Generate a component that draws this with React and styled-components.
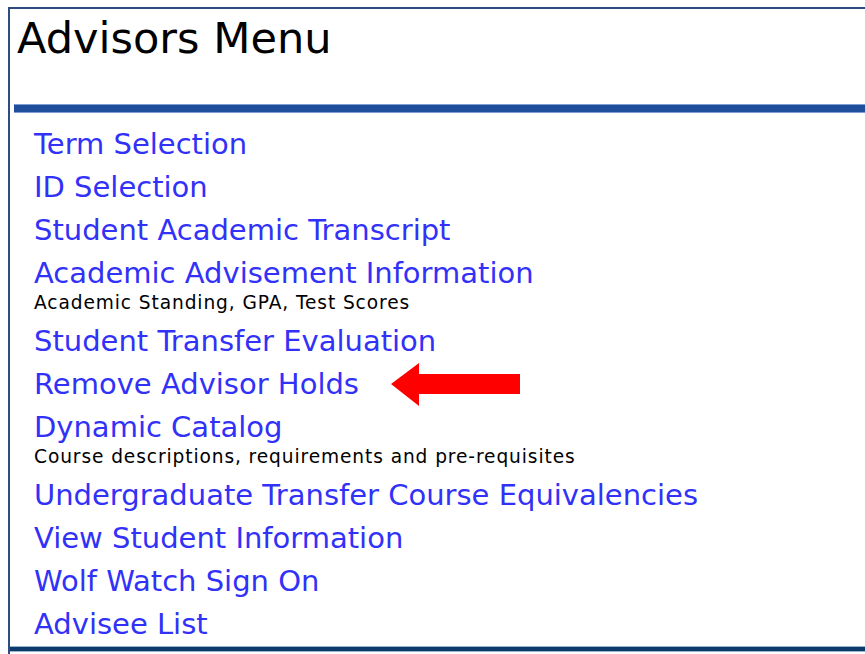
import React from "react"
import styled, { createGlobalStyle } from "styled-components"

const GlobalStyle = createGlobalStyle`
  html, body {
    margin: 0;
    padding: 0;
    background: #fff;
    overflow: hidden;
  }
`

const Frame = styled.div`
  margin: 7px 0 0 8px;
  height: 647px;
  border-top: 2px solid #2d4d80;
  border-left: 2px solid #2d4d80;
  box-sizing: border-box;
  display: flex;
  flex-direction: column;
  font-family: "DejaVu Sans", Verdana, sans-serif;

  & > * {
    flex-shrink: 0;
  }
`

const Title = styled.h1`
  margin: 4px 0 0 7px;
  font-size: 43.1px;
  font-weight: normal;
  line-height: 50px;
  color: #000;
`

const Rule = styled.div`
  margin: 41px 0 0 4px;
  height: 7px;
  background: #1f4e9d;
  border-top: 1px solid #7f9dd1;
  border-bottom: 1px solid #7f9dd1;
`

const MenuList = styled.ul`
  list-style: none;
  margin: 0;
  padding: 10px 0 0 24px;
`

const Item = styled.li`
  display: flex;
  flex-direction: column;
  margin-bottom: ${p => (p.$hasNote ? "7px" : "0")};
`

const Row = styled.div`
  display: flex;
  align-items: center;
`

const MenuLink = styled.a`
  font-size: 29px;
  line-height: 43px;
  color: #3131f8;
  text-decoration: none;
  white-space: nowrap;
`

const Note = styled.span`
  margin-top: -2px;
  font-size: 18.6px;
  letter-spacing: 0.9px;
  line-height: 20px;
  color: #000;
  white-space: nowrap;
`

const Pointer = styled.svg`
  margin-left: 32px;
  flex: none;
`

const FooterBar = styled.div`
  margin-top: auto;
  margin-bottom: 2px;
  height: 4px;
  background: #0c3a6b;
  border-top: 1px solid #9db2cc;
  border-bottom: 1px solid #9db2cc;
`

const items = [
  { label: "Term Selection" },
  { label: "ID Selection" },
  { label: "Student Academic Transcript" },
  { label: "Academic Advisement Information", note: "Academic Standing, GPA, Test Scores" },
  { label: "Student Transfer Evaluation" },
  { label: "Remove Advisor Holds", marked: true },
  { label: "Dynamic Catalog", note: "Course descriptions, requirements and pre-requisites" },
  { label: "Undergraduate Transfer Course Equivalencies" },
  { label: "View Student Information" },
  { label: "Wolf Watch Sign On" },
  { label: "Advisee List" },
]

function LeftArrow() {
  return (
    <Pointer width="130" height="43" viewBox="0 0 130 43">
      <polygon points="0,21 28,0 28,11 129,11 129,31 28,31 28,43" fill="#ff0000" />
    </Pointer>
  )
}

export default function App() {
  return (
    <>
      <GlobalStyle />
      <Frame>
        <Title>Advisors Menu</Title>
        <Rule />
        <MenuList>
          {items.map(item => (
            <Item key={item.label} $hasNote={!!item.note}>
              <Row>
                <MenuLink href="#">{item.label}</MenuLink>
                {item.marked && <LeftArrow />}
              </Row>
              {item.note && <Note>{item.note}</Note>}
            </Item>
          ))}
        </MenuList>
        <FooterBar />
      </Frame>
    </>
  )
}
